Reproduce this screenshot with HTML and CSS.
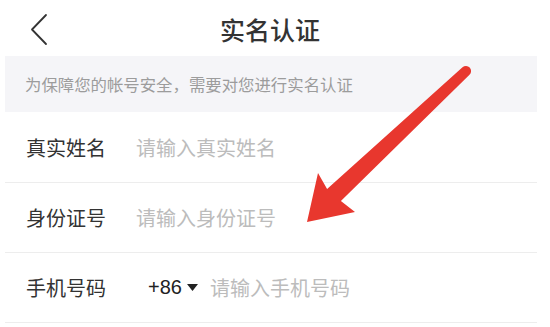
FILE: index.html
```html
<!DOCTYPE html>
<html lang="zh-CN">
<head>
<meta charset="utf-8">
<title>实名认证</title>
<link rel="stylesheet" href="styles.css">
</head>
<body>
<div class="page">
  <header class="topbar">
    <div class="back">
      <svg class="back-icon" width="20" height="34" viewBox="0 0 20 34">
        <polyline points="16,2 2,16.5 16,31" fill="none" stroke="#333" stroke-width="1.8" stroke-linecap="round" stroke-linejoin="round"/>
      </svg>
    </div>
    <h1 class="title">实名认证</h1>
    <div class="spacer"></div>
  </header>
  <div class="notice">为保障您的帐号安全，需要对您进行实名认证</div>
  <div class="form">
    <div class="row">
      <span class="label">真实姓名</span>
      <input class="field" type="text" placeholder="请输入真实姓名">
    </div>
    <div class="row">
      <span class="label">身份证号</span>
      <input class="field" type="text" placeholder="请输入身份证号">
    </div>
    <div class="row">
      <span class="label">手机号码</span>
      <span class="code">+86</span>
      <svg class="caret" width="11" height="7" viewBox="0 0 11 7"><polygon points="0,0 11,0 5.5,7" fill="#222"/></svg>
      <input class="field phone" type="text" placeholder="请输入手机号码">
    </div>
  </div>
  <svg class="arrow" width="550" height="327" viewBox="0 0 550 327">
    <path d="M462.5,67.3 L327.1,189.1 L318,173 L307,222 L355,212 L340.9,200.9 L469.5,74.7 A5,5 0 0 0 462.5,67.3 Z" fill="#e8372e"/>
  </svg>
</div>
</body>
</html>
```

FILE: styles.css
```css
html, body {
  margin: 0;
  padding: 0;
  background: #ffffff;
}

body {
  font-family: "Noto Sans CJK SC", "Liberation Sans", sans-serif;
  color: #333333;
}

.page {
  position: relative;
  width: 550px;
  height: 327px;
  overflow: hidden;
}

.topbar {
  display: flex;
  align-items: center;
  height: 56px;
}

.back {
  width: 80px;
  display: flex;
  align-items: center;
  padding-left: 30px;
  box-sizing: border-box;
  padding-top: 3px;
}

.back-icon {
  display: block;
}

.title {
  flex: 1;
  margin: 0;
  text-align: center;
  font-size: 25px;
  font-weight: 500;
  color: #333333;
  line-height: 1;
  padding-top: 2px;
}

.spacer {
  width: 90px;
}

.notice {
  margin: 0 13px 0 5px;
  height: 56px;
  background: #f5f5f8;
  display: flex;
  align-items: center;
  padding-left: 20px;
  font-size: 16.4px;
  color: #9c9c9c;
}

.form {
  margin: 0 13px 0 5px;
}

.row {
  display: flex;
  align-items: center;
  height: 69px;
  border-bottom: 1px solid #ededed;
  padding-left: 21px;
}

.row:first-child {
  height: 70px;
}

.label {
  width: 80px;
  font-size: 20px;
  color: #333333;
  white-space: nowrap;
}

.field {
  margin-left: 30px;
  border: none;
  outline: none;
  background: transparent;
  padding: 0;
  width: 260px;
  font-family: "Noto Sans CJK SC", "Liberation Sans", sans-serif;
  font-size: 20px;
  color: #333333;
}

.field::placeholder {
  color: #bcbcbc;
}

.code {
  margin-left: 42px;
  font-family: "Liberation Sans", "Noto Sans CJK SC", sans-serif;
  font-size: 20px;
  color: #222222;
}

.caret {
  display: block;
  margin-left: 5px;
}

.field.phone {
  margin-left: 12px;
}

.arrow {
  position: absolute;
  top: 0;
  left: 0;
  pointer-events: none;
}
```
